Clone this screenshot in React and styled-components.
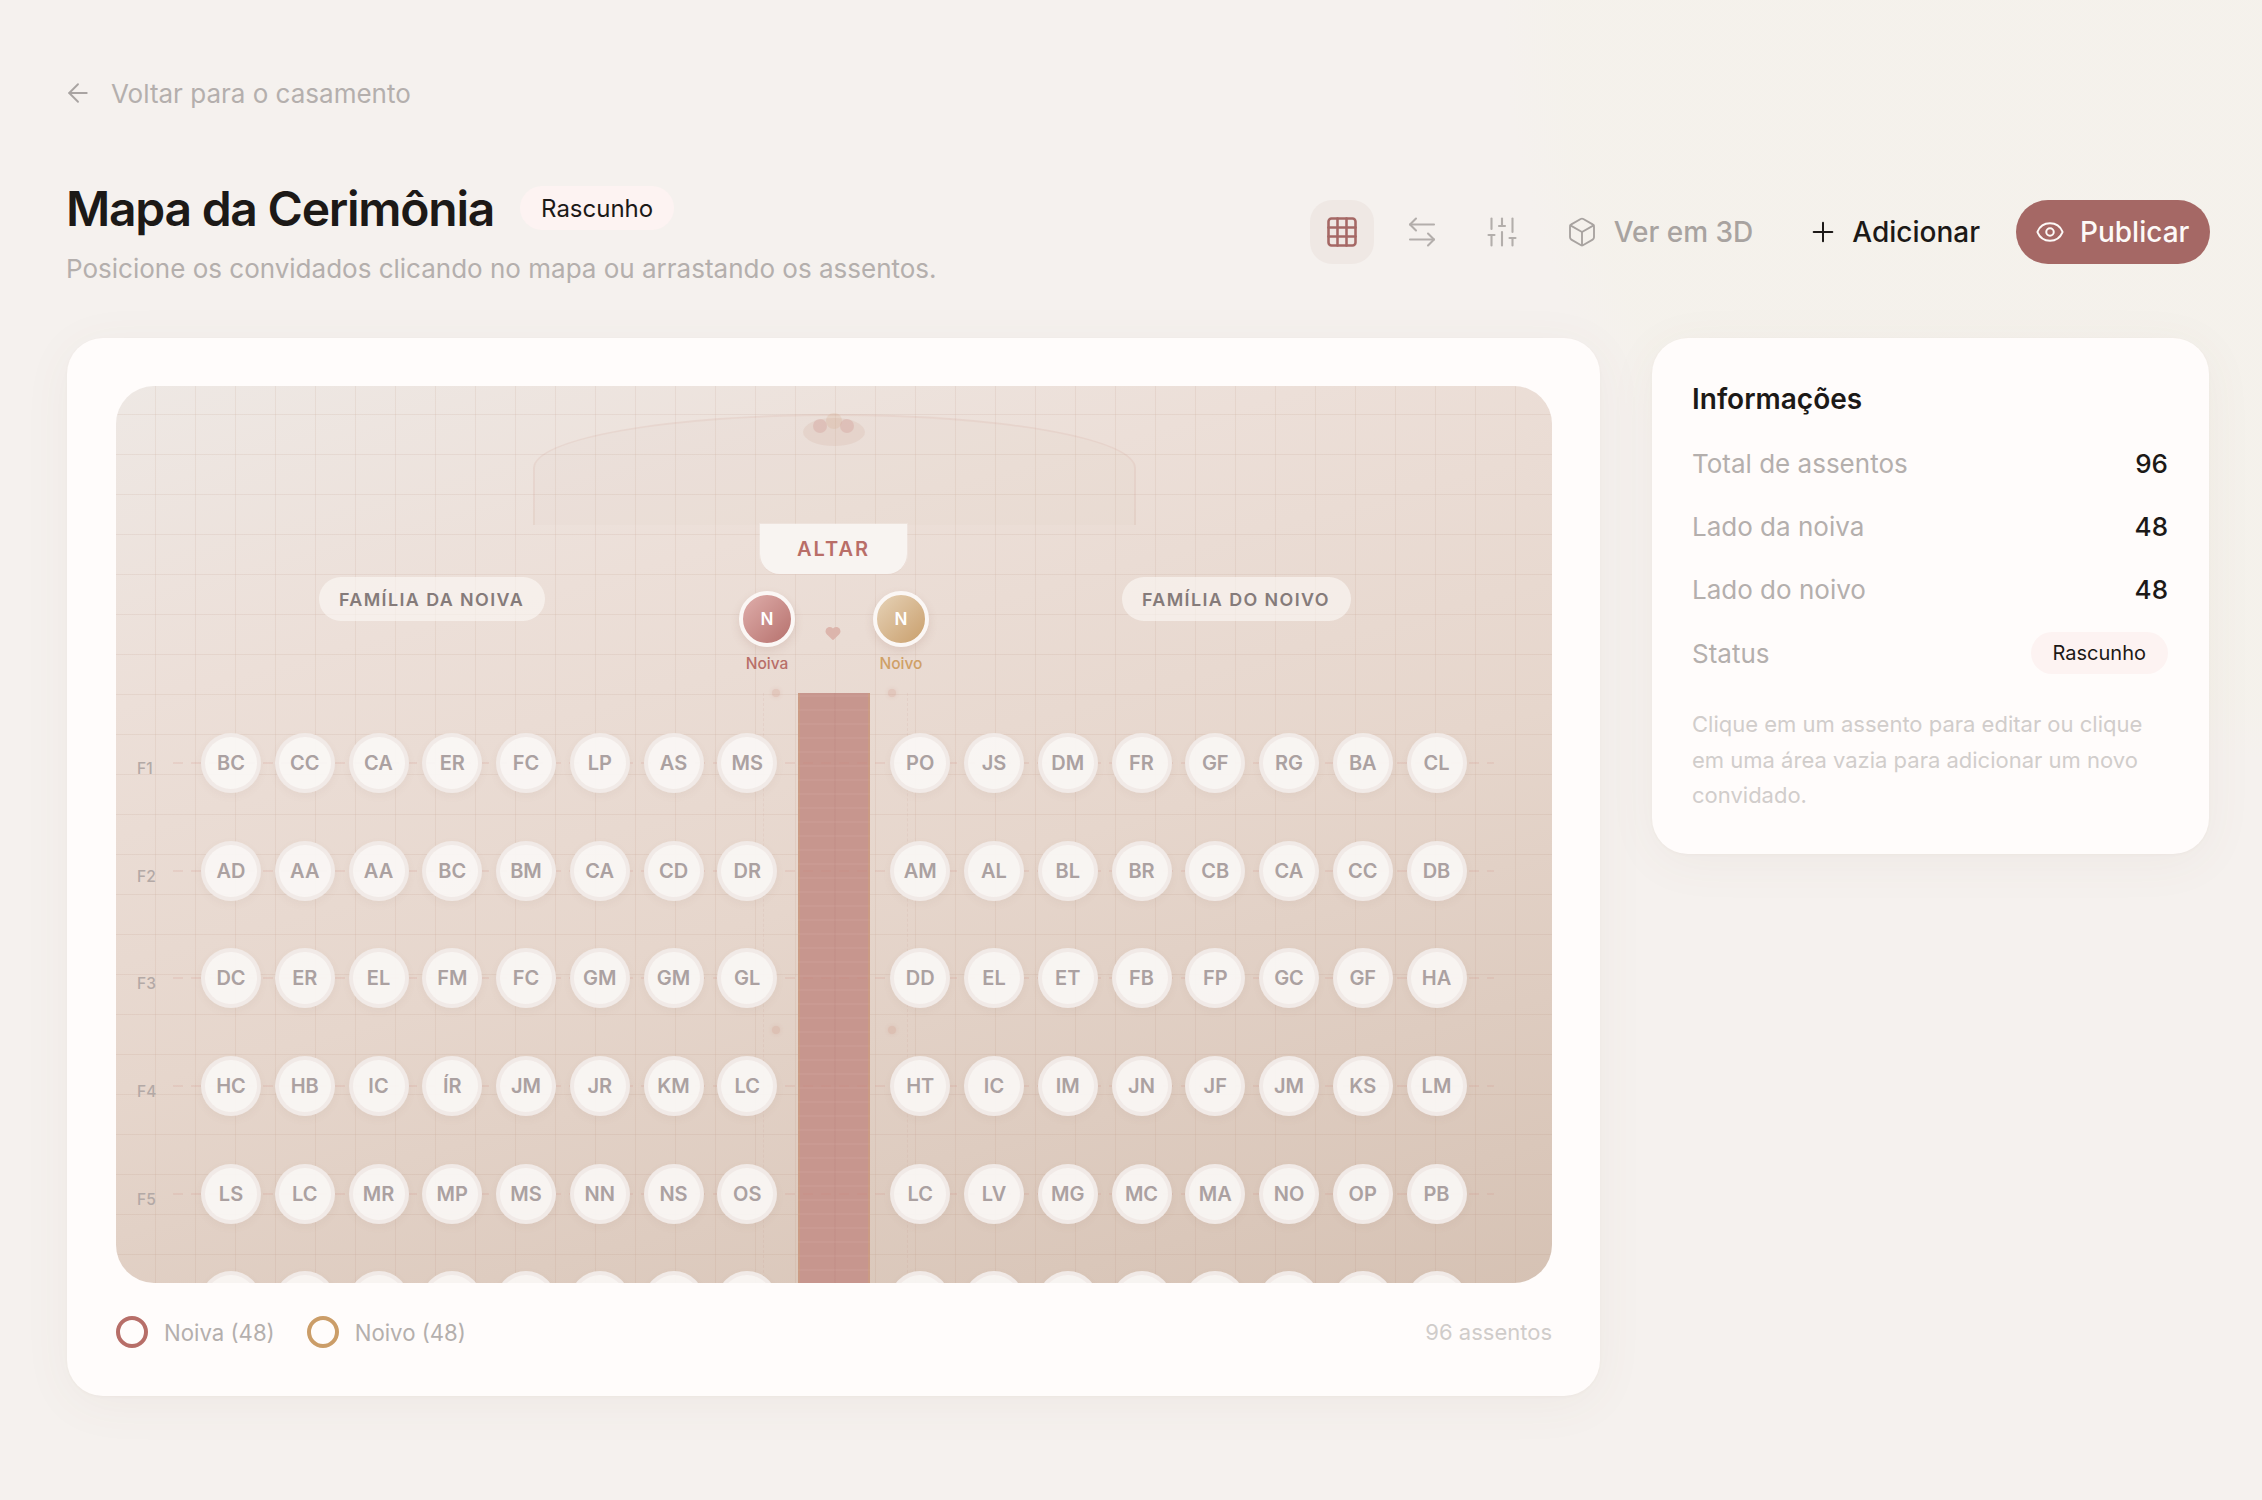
import React from "react";
import styled, { createGlobalStyle } from "styled-components";
import { ArrowLeft, Grid3x3, ArrowLeftRight, SlidersVertical, Box, Plus, Eye, Heart } from "lucide-react";

const GlobalStyle = createGlobalStyle`
    html, body {
        margin: 0;
        padding: 0;
        min-height: 100%;
        background: #f5f1ee;
    }
    body {
        font-family: Inter, "Liberation Sans", sans-serif;
        color: #1c1917;
    }
    * { box-sizing: border-box; }
`

const Page = styled.div`
    min-height: 1500px;
    padding: 75px 53px 0 67px;
    background:
        radial-gradient(circle at 2262px 0, rgba(244,242,232,0.4) 0, rgba(244,242,232,0.4) 700px, transparent 760px),
        #f5f1ee;
`

const BackLink = styled.a`
    display: flex;
    align-items: center;
    gap: 18px;
    height: 36px;
    font-size: 26px;
    color: #b4afad;
    & > svg{
        margin-left: -4px;
        color: #a9a4a2;
    }
`

const Header = styled.div`
    display: flex;
    justify-content: space-between;
    align-items: flex-start;
    margin-top: 67px;
    height: 160px;
`

const TitleBlock = styled.div`
    margin-left: -1px;
`

const TitleRow = styled.div`
    display: flex;
    align-items: center;
    gap: 26px;
    height: 60px;
`

const Title = styled.h1`
    margin: 0;
    font-size: 48px;
    font-weight: 600;
    letter-spacing: -1.25px;
    color: #1c1917;
`

const Badge = styled.span`
    display: inline-flex;
    align-items: center;
    justify-content: center;
    height: ${props => props.$small ? "42px" : "44px"};
    padding: 0 ${props => props.$small ? "22px" : "21px"};
    border-radius: 22px;
    background: #fdf3f2;
    font-size: ${props => props.$small ? "20px" : "24px"};
    color: #1c1917;
`

const Subtitle = styled.p`
    margin: 15px 0 0;
    font-size: 26px;
    color: #b4afad;
`

const Toolbar = styled.div`
    display: flex;
    align-items: center;
    margin: 22px -1px 0 0;
`

const IconButton = styled.button`
    display: flex;
    align-items: center;
    justify-content: center;
    width: 64px;
    height: 64px;
    margin-right: 16px;
    padding: 0;
    border: none;
    border-radius: 22px;
    background: ${props => props.$active ? "#efe8e4" : "transparent"};
    color: ${props => props.$active ? "#a56865" : "#b3aeab"};
`

const TextButton = styled.button`
    display: flex;
    align-items: center;
    gap: ${props => props.$dark ? "13px" : "16px"};
    height: 64px;
    padding: 0 24px 0 16px;
    margin-right: ${props => props.$dark ? "12px" : "14px"};
    border: none;
    background: transparent;
    font-family: inherit;
    font-size: 28px;
    font-weight: 500;
    color: ${props => props.$dark ? "#1c1917" : "#a8a3a0"};
`

const PublishButton = styled.button`
    display: flex;
    align-items: center;
    gap: 15px;
    width: 194px;
    height: 64px;
    padding: 0 0 0 19px;
    border: none;
    border-radius: 32px;
    background: #a56865;
    font-family: inherit;
    font-size: 28px;
    font-weight: 500;
    color: #fdf9f7;
`

const Columns = styled.div`
    display: grid;
    grid-template-columns: 1533px 557px;
    gap: 52px;
    align-items: start;
`

const Card = styled.section`
    background: #fffcfb;
    border-radius: 36px;
    box-shadow: 0 8px 50px rgba(120, 90, 80, 0.055), 0 1px 3px rgba(120, 90, 80, 0.04);
`

const MapCard = styled(Card)`
    height: 1058px;
    padding: 48px 48px 0 49px;
`

const MapArea = styled.div`
    position: relative;
    height: 897px;
    padding: 347px 0 0 21px;
    border-radius: 38px;
    overflow: hidden;
    background:
        repeating-linear-gradient(90deg, transparent 0 39px, rgba(170,120,100,0.11) 39px 40.5px) 0 0 / 40px 100%,
        repeating-linear-gradient(0deg, transparent 0 39px, rgba(170,120,100,0.11) 39px 40.5px) 0 28px / 100% 40px,
        linear-gradient(165deg, #eee8e4 0%, #ecdfd8 25%, #e6d6cc 55%, #d6c2b4 100%);
`

const Balcony = styled.div`
    position: absolute;
    top: 28px;
    left: 417px;
    width: 603px;
    height: 111px;
    border: 2px solid rgba(190, 130, 115, 0.1);
    border-bottom: none;
    border-radius: 301px 301px 0 0 / 54px 54px 0 0;
    background: rgba(200, 150, 130, 0.03);
`

const Flowers = styled.svg`
    position: absolute;
    top: 26px;
    left: 686px;
`

const Altar = styled.div`
    position: absolute;
    top: 138px;
    left: 644px;
    width: 147px;
    height: 50px;
    display: flex;
    align-items: center;
    justify-content: center;
    border-radius: 0 0 20px 20px;
    background: #f8f4f1;
    box-shadow: 0 1px 0 rgba(190,130,115,0.12), 0 0 0 1px rgba(255,255,255,0.2);
    font-size: 20px;
    font-weight: 600;
    letter-spacing: 2px;
    color: #b96e68;
`

const FamilyPill = styled.div`
    position: absolute;
    top: 191px;
    left: ${props => props.$left};
    height: 44px;
    padding: 1px 21px 0 20px;
    display: flex;
    align-items: center;
    border-radius: 22px;
    background: rgba(252, 248, 246, 0.62);
    font-size: 17.9px;
    font-weight: 600;
    letter-spacing: 1.4px;
    color: #857b7a;
`

const Partner = styled.div`
    position: absolute;
    top: 205px;
    left: ${props => props.$left};
    width: 60px;
    display: flex;
    flex-direction: column;
    align-items: center;
    gap: 7px;
    font-size: 15.5px;
    font-weight: 500;
    color: ${props => props.$color};
`

const PartnerAvatar = styled.div`
    display: flex;
    align-items: center;
    justify-content: center;
    width: 56px;
    height: 56px;
    border: 4px solid #fbf7f5;
    border-radius: 50%;
    background: linear-gradient(135deg, ${props => props.$from}, ${props => props.$to});
    box-shadow: 0 4px 10px rgba(150, 100, 90, 0.16);
    font-size: 17px;
    font-weight: 600;
    color: #fff;
`

const HeartMark = styled.div`
    position: absolute;
    top: 238px;
    left: 708px;
    color: #dcb5ac;
    line-height: 0;
`

const Aisle = styled.div`
    position: absolute;
    top: 307px;
    bottom: 0;
    left: 682px;
    width: 72px;
    border-left: 2px solid rgba(212, 165, 116, 0.35);
    border-right: 2px solid rgba(212, 165, 116, 0.35);
    background:
        linear-gradient(90deg, transparent 0 34px, rgba(170,100,95,0.08) 34px 36px, transparent 36px),
        repeating-linear-gradient(0deg, transparent 0 12px, rgba(255,235,225,0.05) 12px 14px),
        #c7968e;
`

const Petal = styled.div`
    position: absolute;
    top: ${props => props.$top};
    left: ${props => props.$left};
    width: 8px;
    height: 8px;
    border-radius: 50%;
    background: rgba(200, 130, 115, 0.22);
    box-shadow: 0 0 4px rgba(200, 130, 115, 0.2);
`

const AisleEdge = styled.div`
    position: absolute;
    top: 307px;
    bottom: 0;
    left: ${props => props.$left};
    border-left: 1px dashed rgba(190, 130, 115, 0.1);
`

const SeatRows = styled.div`
    position: relative;
    display: flex;
    flex-direction: column;
    gap: 47.7px;
`

const SeatRow = styled.div`
    position: relative;
    display: flex;
    align-items: center;
    height: 60px;
    &::before{
        content: "";
        position: absolute;
        top: 29px;
        left: 36px;
        width: 1321px;
        height: 2px;
        background: repeating-linear-gradient(90deg, rgba(205,130,120,0.15) 0 10px, transparent 10px 18px);
    }
`

const RowLabel = styled.span`
    width: 64px;
    padding-top: 11px;
    font-size: 15.5px;
    font-weight: 500;
    color: #b3a9a6;
`

const SeatGroup = styled.div`
    position: relative;
    display: flex;
    gap: 13.75px;
    margin-right: ${props => props.$gap || "0"};
`

const Seat = styled.div`
    display: flex;
    align-items: center;
    justify-content: center;
    width: 60px;
    height: 60px;
    border: 4px solid rgba(240, 233, 230, 0.95);
    border-radius: 50%;
    background: rgba(250, 247, 245, 0.92);
    box-shadow: 0 3px 8px rgba(140, 100, 85, 0.06);
    font-size: 20px;
    font-weight: 600;
    color: #aba1a1;
`

const MapFooter = styled.div`
    display: flex;
    align-items: center;
    justify-content: space-between;
    height: 32px;
    margin-top: 33px;
`

const Legend = styled.div`
    display: flex;
    align-items: center;
    gap: 32px;
`

const LegendItem = styled.div`
    display: flex;
    align-items: center;
    gap: 16px;
    font-size: 22.2px;
    color: #b4afad;
`

const LegendRing = styled.span`
    width: 32px;
    height: 32px;
    border: 4px solid ${props => props.$color};
    border-radius: 50%;
`

const SeatCount = styled.span`
    font-size: 22px;
    color: #d0ccca;
`

const InfoCard = styled(Card)`
    height: 516px;
    padding: 44px 41px 0 40px;
`

const InfoTitle = styled.h2`
    margin: 0 0 26px;
    font-size: 28px;
    line-height: 34px;
    font-weight: 600;
    color: #1c1917;
`

const InfoRow = styled.div`
    display: flex;
    align-items: center;
    justify-content: space-between;
    height: 42px;
    margin-bottom: 21.4px;
    font-size: 26px;
    color: #b4afad;
`

const InfoValue = styled.span`
    font-weight: 500;
    color: #1c1917;
`

const InfoNote = styled.p`
    margin: 33px 0 0;
    font-size: 22px;
    line-height: 35.6px;
    color: #d1cdcb;
`

const rows = [
    { label: "F1", left: ["BC", "CC", "CA", "ER", "FC", "LP", "AS", "MS"], right: ["PO", "JS", "DM", "FR", "GF", "RG", "BA", "CL"] },
    { label: "F2", left: ["AD", "AA", "AA", "BC", "BM", "CA", "CD", "DR"], right: ["AM", "AL", "BL", "BR", "CB", "CA", "CC", "DB"] },
    { label: "F3", left: ["DC", "ER", "EL", "FM", "FC", "GM", "GM", "GL"], right: ["DD", "EL", "ET", "FB", "FP", "GC", "GF", "HA"] },
    { label: "F4", left: ["HC", "HB", "IC", "ÍR", "JM", "JR", "KM", "LC"], right: ["HT", "IC", "IM", "JN", "JF", "JM", "KS", "LM"] },
    { label: "F5", left: ["LS", "LC", "MR", "MP", "MS", "NN", "NS", "OS"], right: ["LC", "LV", "MG", "MC", "MA", "NO", "OP", "PB"] },
    { label: "", left: Array(8).fill(""), right: Array(8).fill("") },
]

const info = [
    ["Total de assentos", "96"],
    ["Lado da noiva", "48"],
    ["Lado do noivo", "48"],
]

function App()
{
    return(
        <Page>
            <GlobalStyle/>
            <BackLink>
                <ArrowLeft size={30} strokeWidth={1.5}/>
                Voltar para o casamento
            </BackLink>
            <Header>
                <TitleBlock>
                    <TitleRow>
                        <Title>Mapa da Cerimônia</Title>
                        <Badge>Rascunho</Badge>
                    </TitleRow>
                    <Subtitle>Posicione os convidados clicando no mapa ou arrastando os assentos.</Subtitle>
                </TitleBlock>
                <Toolbar>
                    <IconButton $active><Grid3x3 size={36} strokeWidth={1.7}/></IconButton>
                    <IconButton><ArrowLeftRight size={36} strokeWidth={1.4}/></IconButton>
                    <IconButton><SlidersVertical size={36} strokeWidth={1.4}/></IconButton>
                    <TextButton><Box size={32} strokeWidth={1.4}/>Ver em 3D</TextButton>
                    <TextButton $dark><Plus size={32} strokeWidth={1.5}/>Adicionar</TextButton>
                    <PublishButton><Eye size={30} strokeWidth={1.6}/>Publicar</PublishButton>
                </Toolbar>
            </Header>
            <Columns>
                <MapCard>
                    <MapArea>
                        <Balcony/>
                        <Flowers width="64" height="36" viewBox="0 0 64 36">
                            <ellipse cx="32" cy="20" rx="31" ry="14" fill="rgba(200,150,130,0.14)"/>
                            <circle cx="32" cy="9" r="8" fill="rgba(212,165,130,0.2)"/>
                            <ellipse cx="18" cy="14" rx="7" ry="7" fill="rgba(200,130,125,0.24)"/>
                            <ellipse cx="45" cy="14" rx="7" ry="7" fill="rgba(200,130,125,0.24)"/>
                        </Flowers>
                        <Altar>ALTAR</Altar>
                        <FamilyPill $left="203px">FAMÍLIA DA NOIVA</FamilyPill>
                        <FamilyPill $left="1006px">FAMÍLIA DO NOIVO</FamilyPill>
                        <Partner $left="621px" $color="#b86f69">
                            <PartnerAvatar $from="#dfaeab" $to="#b6716d">N</PartnerAvatar>
                            Noiva
                        </Partner>
                        <Partner $left="755px" $color="#cfa067">
                            <PartnerAvatar $from="#e6d2b7" $to="#c99f6c">N</PartnerAvatar>
                            Noivo
                        </Partner>
                        <HeartMark><Heart size={18} fill="currentColor" strokeWidth={0}/></HeartMark>
                        <Aisle/>
                        <AisleEdge $left="647px"/>
                        <AisleEdge $left="791px"/>
                        <Petal $top="303px" $left="656px"/>
                        <Petal $top="303px" $left="772px"/>
                        <Petal $top="640px" $left="656px"/>
                        <Petal $top="640px" $left="772px"/>
                        <SeatRows>
                            {rows.map((row, i) => (
                                <SeatRow key={i}>
                                    <RowLabel>{row.label}</RowLabel>
                                    <SeatGroup $gap="113px">
                                        {row.left.map((s, j) => <Seat key={j}>{s}</Seat>)}
                                    </SeatGroup>
                                    <SeatGroup>
                                        {row.right.map((s, j) => <Seat key={j}>{s}</Seat>)}
                                    </SeatGroup>
                                </SeatRow>
                            ))}
                        </SeatRows>
                    </MapArea>
                    <MapFooter>
                        <Legend>
                            <LegendItem><LegendRing $color="#b76e68"/>Noiva (48)</LegendItem>
                            <LegendItem><LegendRing $color="#cb9d68"/>Noivo (48)</LegendItem>
                        </Legend>
                        <SeatCount>96 assentos</SeatCount>
                    </MapFooter>
                </MapCard>
                <InfoCard>
                    <InfoTitle>Informações</InfoTitle>
                    {info.map(([label, value]) => (
                        <InfoRow key={label}>
                            {label}
                            <InfoValue>{value}</InfoValue>
                        </InfoRow>
                    ))}
                    <InfoRow>
                        Status
                        <Badge $small>Rascunho</Badge>
                    </InfoRow>
                    <InfoNote>Clique em um assento para editar ou clique em uma área vazia para adicionar um novo convidado.</InfoNote>
                </InfoCard>
            </Columns>
        </Page>
    )
}

export default App;
